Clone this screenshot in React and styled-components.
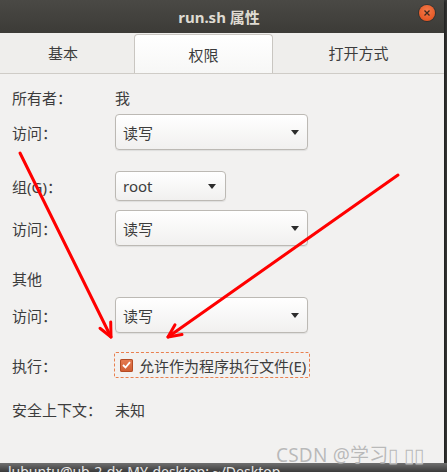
import React from "react";
import styled, { createGlobalStyle } from "styled-components";

const Global = createGlobalStyle`
  html, body { margin: 0; padding: 0; }
  body {
    width: 447px; height: 472px; overflow: hidden;
    background: #3a3a38;
    font-family: "Noto Sans", "Noto Sans CJK SC", sans-serif;
  }
`;

const Screen = styled.div`
  position: relative;
  width: 447px;
  height: 472px;
  display: flex;
  flex-direction: column;
  background: #3a3a38;
`;

const Window = styled.div`
  width: 444px;
  height: 463px;
  display: flex;
  flex-direction: column;
  background: #f2f1f0;
  box-shadow: 1px 1px 3px rgba(0,0,0,0.6);
`;

const TitleBar = styled.div`
  height: 33px;
  flex: none;
  display: flex;
  align-items: center;
  justify-content: center;
  position: relative;
  background: linear-gradient(#4a4945, #3c3b37);
  color: #dfdbd2;
  font-weight: bold;
  font-size: 15px;
  padding-right: 6px;
`;

const CloseBtn = styled.div`
  position: absolute;
  right: 9px;
  top: 5px;
  width: 16px;
  height: 16px;
  border-radius: 50%;
  background: radial-gradient(circle at 50% 35%, #f47a4a, #df4b17);
  box-shadow: 0 0 0 1px rgba(0,0,0,0.25);
  display: flex;
  align-items: center;
  justify-content: center;
`;

const TabBar = styled.div`
  height: 40px;
  flex: none;
  display: flex;
  align-items: flex-end;
  border-bottom: 1px solid #cfccc7;
  background: #efeeec;
`;

const Tab = styled.div`
  height: ${p => (p.$active ? "39px" : "40px")};
  width: ${p => p.$w || "auto"};
  flex: ${p => (p.$grow ? 1 : "none")};
  box-sizing: border-box;
  display: flex;
  align-items: center;
  justify-content: center;
  padding-right: ${p => p.$pr || 0}px;
  padding-bottom: ${p => (p.$active ? 0 : 1)}px;
  font-size: 15px;
  color: #3c3c3c;
  background: ${p => (p.$active ? "linear-gradient(#ffffff, #f7f7f6)" : "transparent")};
  border: ${p => (p.$active ? "1px solid #c9c6c1" : "none")};
  border-bottom: none;
  border-radius: 4px 4px 0 0;
`;

const Content = styled.div`
  display: flex;
  flex-direction: column;
  padding: 0 12px;
  color: #3c3c3c;
  font-size: 15px;
`;

const Row = styled.div`
  display: flex;
  align-items: center;
  margin-top: ${p => p.$mt}px;
  height: ${p => p.$h}px;
`;

const Label = styled.div`
  width: 103px;
  flex: none;
`;

const Value = styled.div``;

const Combo = styled.div`
  width: ${p => p.$w}px;
  height: ${p => p.$h}px;
  box-sizing: border-box;
  border: 1px solid #bcb9b4;
  border-radius: 4px;
  background: linear-gradient(#ffffff, #f1f0ef);
  box-shadow: 0 1px 1px rgba(0,0,0,0.08);
  display: flex;
  align-items: center;
  justify-content: space-between;
  padding: 0 ${p => p.$pr}px 0 7px;
`;

const Caret = styled.span`
  width: 0;
  height: 0;
  border-left: 4.5px solid transparent;
  border-right: 4.5px solid transparent;
  border-top: 5px solid #2c2c2c;
`;

const CheckFocus = styled.label`
  width: 196px;
  height: 26px;
  box-sizing: border-box;
  margin-left: -1px;
  border: 1px dashed #e9804f;
  border-radius: 2px;
  display: flex;
  align-items: center;
  gap: 6px;
  padding-left: 5px;
`;

const Box = styled.span`
  width: 13px;
  height: 13px;
  flex: none;
  border-radius: 2px;
  background: linear-gradient(#e57c52, #cf5c31);
  box-shadow: inset 0 0 0 1px #b44c25;
  display: flex;
  align-items: center;
  justify-content: center;
`;

const Bottom = styled.div`
  flex: 1;
  overflow: hidden;
  background: linear-gradient(#707070, #3a3a3a);
  color: #e8e8e8;
  font-size: 14px;
  line-height: 14px;
  padding-left: 8px;
  padding-top: 2px;
  white-space: nowrap;
`;

const Watermark = styled.div`
  position: absolute;
  left: 276px;
  top: 440px;
  font-size: 19px;
  color: #b9b9b9;
  letter-spacing: 0.2px;
  text-shadow: 0 0 1px rgba(255,255,255,0.8);
  font-family: "Noto Sans", "Noto Sans CJK SC", sans-serif;
  white-space: nowrap;
`;

const Overlay = styled.svg`
  position: absolute;
  left: 0;
  top: 0;
  pointer-events: none;
`;

export default function App() {
  return (
    <>
      <Global />
      <Screen>
        <Window>
          <TitleBar>
            run.sh 属性
            <CloseBtn>
              <svg width="8" height="8" viewBox="0 0 8 8">
                <path d="M1.5 1.5 L6.5 6.5 M6.5 1.5 L1.5 6.5" stroke="#3a2a20" strokeWidth="1.3" />
              </svg>
            </CloseBtn>
          </TitleBar>
          <TabBar>
            <Tab $w="134px" $pr={8}>基本</Tab>
            <Tab $w="139px" $active>权限</Tab>
            <Tab $grow>打开方式</Tab>
          </TabBar>
          <Content>
            <Row $mt={13} $h={20}>
              <Label>所有者：</Label>
              <Value>我</Value>
            </Row>
            <Row $mt={7} $h={36}>
              <Label>访问：</Label>
              <Combo $w={193} $h={36} $pr={8}>读写<Caret /></Combo>
            </Row>
            <Row $mt={21} $h={30}>
              <Label>组(G)：</Label>
              <Combo $w={111} $h={30} $pr={9}>root<Caret /></Combo>
            </Row>
            <Row $mt={9} $h={36}>
              <Label>访问：</Label>
              <Combo $w={193} $h={36} $pr={8}>读写<Caret /></Combo>
            </Row>
            <Row $mt={22} $h={20}>
              <Label>其他</Label>
            </Row>
            <Row $mt={9} $h={36}>
              <Label>访问：</Label>
              <Combo $w={193} $h={36} $pr={8}>读写<Caret /></Combo>
            </Row>
            <Row $mt={19} $h={26}>
              <Label>执行：</Label>
              <CheckFocus>
                <Box>
                  <svg width="9" height="8" viewBox="0 0 9 8">
                    <path d="M1 4 L3.5 6.5 L8 1.2" stroke="#fff" strokeWidth="1.8" fill="none" />
                  </svg>
                </Box>
                允许作为程序执行文件(E)
              </CheckFocus>
            </Row>
            <Row $mt={21} $h={20}>
              <Label>安全上下文：</Label>
              <Value>未知</Value>
            </Row>
          </Content>
        </Window>
        <Bottom>lubuntu@ub-2-dx-MY-desktop: ~/Desktop</Bottom>
        <Watermark>CSDN @学习▯ ▯▯</Watermark>
        <Overlay width="447" height="472" viewBox="0 0 447 472">
          <g stroke="#ff0000" strokeWidth="3" fill="none" strokeLinecap="round" strokeLinejoin="round">
            <path d="M20 153 L111 337" />
            <path d="M110.7 322 L111 337 L100 328.3" />
            <path d="M398 175 L168 337" />
            <path d="M182 334.5 L168 337 L175 324.8" />
          </g>
        </Overlay>
      </Screen>
    </>
  );
}
